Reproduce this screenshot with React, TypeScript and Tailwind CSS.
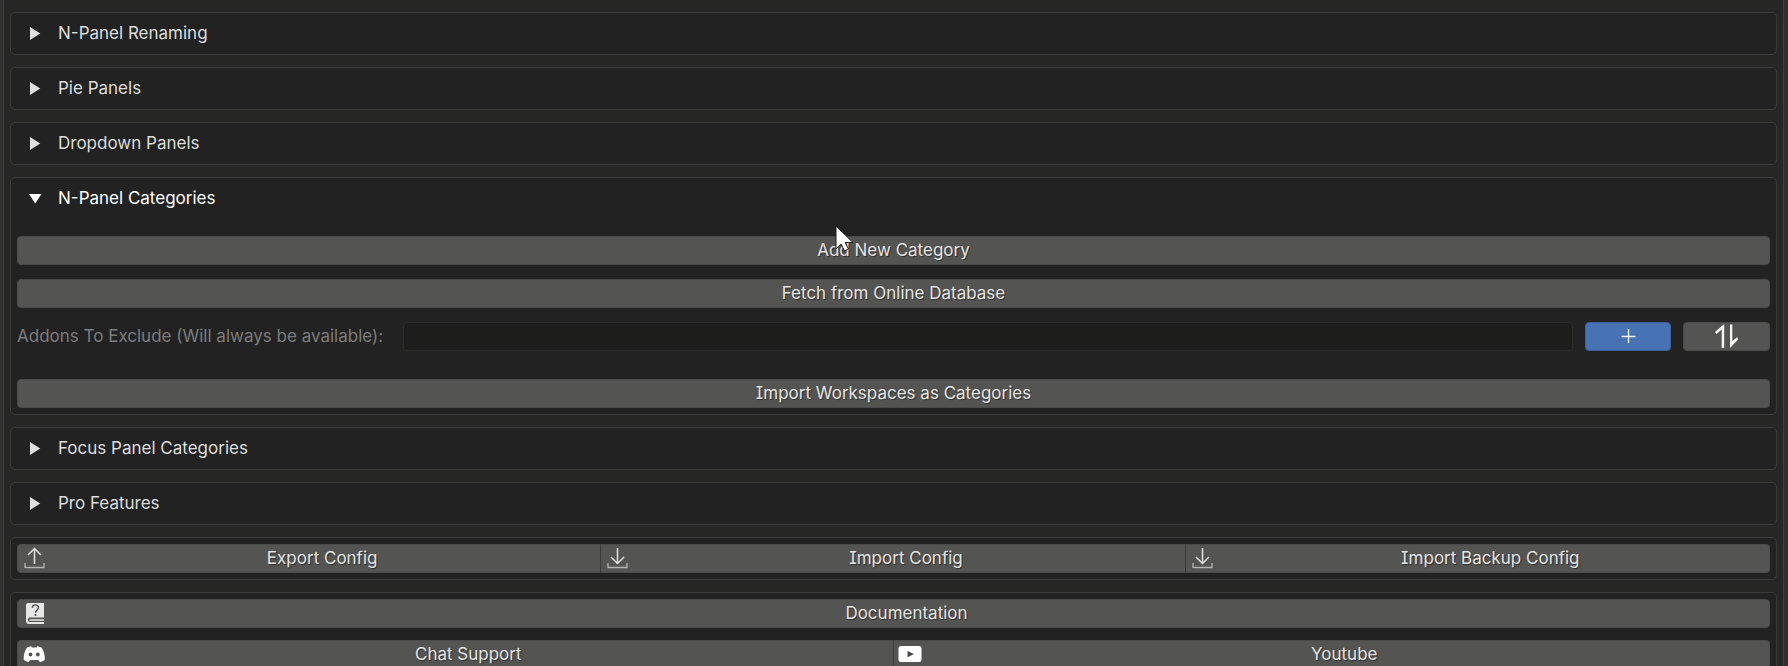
import React, { useState, type ReactNode } from 'react';

const BOX = 'rounded-[5px] border border-[#3b3b3b] bg-[#222223]';
const BUTTON =
  'relative flex h-[29px] items-center justify-center border-y border-[#4a4a4a] bg-[#545452] pb-[2px] text-[#e4e4e4] [text-shadow:1px_1px_1px_rgba(0,0,0,0.45)]';

function Section({
  title,
  defaultOpen = false,
  children,
}: {
  title: string;
  defaultOpen?: boolean;
  children?: ReactNode;
}) {
  const [open, setOpen] = useState(defaultOpen);
  return (
    <section className={BOX}>
      <button
        type="button"
        aria-expanded={open}
        onClick={() => setOpen(!open)}
        className={`flex h-[41px] w-full items-center gap-[15px] pb-[2px] pl-4 text-left ${open ? 'text-white' : 'text-[#dedede]'}`}
      >
        <svg width="16" height="16" viewBox="0 0 16 16" fill="currentColor" aria-hidden="true">
          {open ? <path d="M2 4h12.500L8.200 13.500z" /> : <path d="M3 2v13L13.300 8.500z" />}
        </svg>
        <span>{title}</span>
      </button>
      {open && children}
    </section>
  );
}

function ActionButton({
  label,
  icon,
  shape = 'rounded-[4px] border-x',
}: {
  label: string;
  icon?: ReactNode;
  shape?: string;
}) {
  return (
    <button type="button" className={`${BUTTON} w-full ${shape} ${icon ? 'pl-[26px]' : ''}`}>
      {icon && <span className="absolute left-1 flex h-6 w-6 items-center justify-center">{icon}</span>}
      <span>{label}</span>
    </button>
  );
}

function ExportIcon() {
  return (
    <svg width="24" height="24" viewBox="0 0 24 24" fill="none" stroke="#e2e2e2" aria-hidden="true">
      <path d="M12.500 18V3M6 9l6.500-6.500L19 9" strokeWidth="1.500" />
      <path d="M3 17v4.500h19V17" stroke="#b4b4b4" strokeWidth="1.300" />
    </svg>
  );
}

function ImportIcon() {
  return (
    <svg width="24" height="24" viewBox="0 0 24 24" fill="none" stroke="#e2e2e2" aria-hidden="true">
      <path d="M12.500 2v15M6 11l6.500 6.500L19 11" strokeWidth="1.500" />
      <path d="M3 17v4.500h19V17" stroke="#b4b4b4" strokeWidth="1.300" />
    </svg>
  );
}

function HelpBookIcon() {
  return (
    <svg width="24" height="24" viewBox="0 0 24 24" fill="none" aria-hidden="true">
      <path
        d="M6 2h16v14.500H8a2 2 0 0 0 0 4.500h14v2H7a3 3 0 0 1-3-3V4a2 2 0 0 1 2-2z"
        fill="#e6e6e6"
      />
      <path d="M8 18.200h14v1.500H8a.75.75 0 0 1 0-1.500z" fill="#e6e6e6" />
      <path
        d="M10.300 6.800c0-4 6.200-3.800 6.200-.3 0 2.500-3 2.400-3 5.200"
        stroke="#4a4a4a"
        strokeWidth="1.400"
      />
      <rect x="12.700" y="13.200" width="1.700" height="1.700" fill="#4a4a4a" />
    </svg>
  );
}

function DiscordIcon() {
  return (
    <svg width="24" height="24" viewBox="0 0 24 24" aria-hidden="true">
      <path
        d="M5 5.500 9 4.300l1 1.200h4.500l1-1.200 4 1.200c2.500 3.500 3.500 8 3.300 12.200-1.700 1.400-3.400 2-5 2.300l-1.500-2H8.200l-1.500 2c-1.600-.3-3.300-.9-5-2.300C1.500 13.500 2.500 9 5 5.500z"
        fill="#fff"
      />
      <ellipse cx="8.500" cy="12.500" rx="1.900" ry="2" fill="#545452" />
      <ellipse cx="15.800" cy="12.500" rx="1.900" ry="2" fill="#545452" />
    </svg>
  );
}

function YoutubeIcon() {
  return (
    <svg width="24" height="24" viewBox="0 0 24 24" aria-hidden="true">
      <rect x="0.500" y="4" width="23" height="16" rx="2.500" fill="#fff" />
      <path d="M9.500 9v6.200l6.500-3.100z" fill="#484848" />
    </svg>
  );
}

function Cursor() {
  return (
    <svg
      width="20"
      height="28"
      viewBox="0 0 20 28"
      className="pointer-events-none absolute -top-[11px] left-[47%] z-10 -ml-[6px]"
      aria-hidden="true"
    >
      <path
        d="M1 1v23l5-5 3.500 7 4-2-3.300-6.500H18z"
        fill="#fff"
        stroke="#1c1c1c"
        strokeWidth="1"
      />
    </svg>
  );
}

export default function App() {
  return (
    <div className="min-h-screen bg-[#303031] pr-1 pl-[3px] font-['Inter',sans-serif] text-[17px] leading-[20px] [font-feature-settings:'cv08'_1]">
      <main className="flex min-h-screen flex-col gap-3 border-x border-[#3e3e3f] bg-[#262625] px-[6px] pt-3">
        <Section title="N-Panel Renaming" />
        <Section title="Pie Panels" />
        <Section title="Dropdown Panels" />
        <Section title="N-Panel Categories" defaultOpen>
          <div className="flex flex-col gap-[14px] px-[6px] pt-[17px] pb-[6px]">
            <div className="relative">
              <ActionButton label="Add New Category" />
              <Cursor />
            </div>
            <ActionButton label="Fetch from Online Database" />
            <div className="mb-[14px] flex items-center gap-3">
              <label htmlFor="exclude" className="w-[374px] pb-[2px] text-[#7c7c7c]">
                Addons To Exclude (Will always be available):
              </label>
              <input
                id="exclude"
                type="text"
                className="h-[29px] min-w-0 flex-1 rounded-[4px] border border-[#2c2c2c] bg-[#1d1d1b] px-2 text-[#e4e4e4] outline-none"
              />
              <button
                type="button"
                aria-label="Add addon"
                className="flex h-[29px] w-[86px] items-center justify-center rounded-[4px] border border-[#3f5f96] bg-[#4772b3] pb-[2px]"
              >
                <svg width="16" height="16" viewBox="0 0 16 16" stroke="#f0f0f0" strokeWidth="1.400">
                  <path d="M8.500 1v14M1.500 8.500h14" />
                </svg>
              </button>
              <button type="button" aria-label="Reorder" className={`${BUTTON} w-[87px] rounded-[4px] border-x`}>
                <svg width="24" height="26" viewBox="0 0 24 26" fill="#f4f4f4">
                  <path d="M6.700 25V6.500L1.600 11 0 9 8.500 1.500H9.200V25zM15 1.500h2.300V18l4.700-3.800 1.300 2L15.600 24.500H15z" />
                </svg>
              </button>
            </div>
            <ActionButton label="Import Workspaces as Categories" />
          </div>
        </Section>
        <Section title="Focus Panel Categories" />
        <Section title="Pro Features" />
        <div className={`${BOX} grid grid-cols-3 p-[6px]`}>
          <ActionButton label="Export Config" icon={<ExportIcon />} shape="rounded-l-[4px] border-x border-r-[#3a3a3a]" />
          <ActionButton label="Import Config" icon={<ImportIcon />} shape="border-r border-r-[#3a3a3a]" />
          <ActionButton label="Import Backup Config" icon={<ImportIcon />} shape="rounded-r-[4px] border-r" />
        </div>
        <div className={`${BOX} flex flex-col gap-3 p-[6px]`}>
          <ActionButton label="Documentation" icon={<HelpBookIcon />} />
          <div className="grid grid-cols-2">
            <ActionButton label="Chat Support" icon={<DiscordIcon />} shape="rounded-l-[4px] border-x border-r-[#3a3a3a]" />
            <ActionButton label="Youtube" icon={<YoutubeIcon />} shape="rounded-r-[4px] border-r" />
          </div>
        </div>
      </main>
    </div>
  );
}
